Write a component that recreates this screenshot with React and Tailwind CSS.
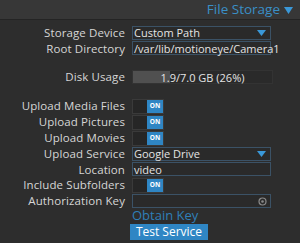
import React from "react";

function Row({ label, children, h = "h-[15.5px]" }) {
  return (
    <div className={`flex items-center ${h}`}>
      <div className="w-[126px] pr-[1px] text-right text-[11.5px] tracking-[0.1px] text-[#d6d6d6] leading-none">{label}</div>
      <div className="flex-1 pl-[6px] flex items-center">{children}</div>
    </div>
  );
}

function Box({ children, arrow, icon }) {
  return (
    <div className="relative flex items-center w-[139px] h-[14px] border border-[#3b5266] bg-[#2a2a2a] pl-[1px] text-[11px] text-[#e4e4e4] leading-none">
      <span>{children}</span>
      {arrow && (
        <svg className="absolute right-[4px] top-[3px]" width="9" height="6" viewBox="0 0 9 6">
          <path d="M0 0 L9 0 L4.5 6 Z" fill="#3a98d8" />
        </svg>
      )}
      {icon && (
        <svg className="absolute right-[3px] top-[2px]" width="9" height="9" viewBox="0 0 9 9">
          <circle cx="4.5" cy="4.5" r="3.5" fill="none" stroke="#8a8a8a" strokeWidth="1.2" />
          <circle cx="4.5" cy="4.5" r="1.3" fill="#8a8a8a" />
        </svg>
      )}
    </div>
  );
}

function Toggle() {
  return (
    <div className="flex w-[32px] h-[15px] border border-[#3a3a3a] bg-[#262626]">
      <div className="flex-1" />
      <div className="w-[16px] bg-[#2f86c4] flex items-center justify-center text-[6.5px] font-bold text-white leading-none">ON</div>
    </div>
  );
}

export default function App() {
  return (
    <div className="w-[300px] h-[243px] bg-[#2d2d2d] overflow-hidden" style={{ fontFamily: "'Open Sans', 'DejaVu Sans', sans-serif" }}>
      <div className="h-[20px] bg-[#373737] border-b border-[#242424] flex items-center justify-end pr-[7px] text-[13.5px] text-[#3a8fc6] leading-none">
        <span>File Storage</span>
        <svg className="ml-[4px] mt-[1px]" width="9" height="7" viewBox="0 0 9 7">
          <path d="M0 0 L9 0 L4.5 7 Z" fill="#3a98d8" />
        </svg>
      </div>
      <div className="pt-[5px]">
        <Row label="Storage Device"><Box arrow>Custom Path</Box></Row>
        <Row label="Root Directory"><Box>/var/lib/motioneye/Camera1</Box></Row>
        <div className="h-[13px]" />
        <Row label="Disk Usage" h="h-[16px]">
          <div className="relative w-[141px] h-[14px] bg-[#2a2a2a] border border-[#333]">
            <div className="absolute left-0 top-0 bottom-0 w-[37px] bg-[#505050]" />
            <div className="absolute inset-0 flex items-center justify-center text-[11px] text-[#e4e4e4] leading-none">1.9/7.0 GB (26%)</div>
          </div>
        </Row>
        <div className="h-[13px]" />
        <Row label="Upload Media Files" h="h-[16px]"><Toggle /></Row>
        <Row label="Upload Pictures" h="h-[16px]"><Toggle /></Row>
        <Row label="Upload Movies" h="h-[16px]"><Toggle /></Row>
        <Row label="Upload Service"><Box arrow>Google Drive</Box></Row>
        <Row label="Location"><Box>video</Box></Row>
        <Row label="Include Subfolders" h="h-[16px]"><Toggle /></Row>
        <Row label="Authorization Key"><Box icon></Box></Row>
        <div className="pl-[132px] h-[14px] flex items-center text-[13px] text-[#2f7fb8] leading-none">Obtain Key</div>
        <div className="pl-[130px] pt-[1px]">
          <div className="w-[78px] h-[16px] bg-[#2f86c4] flex items-center justify-center text-[12px] text-white leading-none">Test Service</div>
        </div>
      </div>
    </div>
  );
}
